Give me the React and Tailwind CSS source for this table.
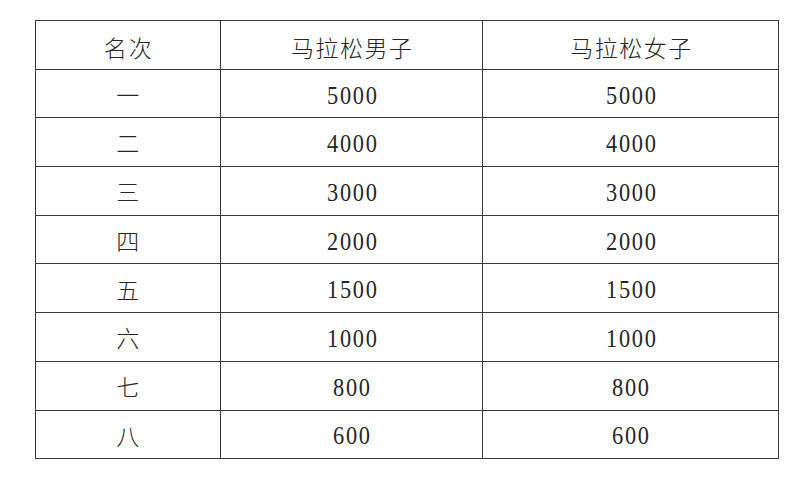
import React from "react";

const rows = [
  ["一", "5000", "5000"],
  ["二", "4000", "4000"],
  ["三", "3000", "3000"],
  ["四", "2000", "2000"],
  ["五", "1500", "1500"],
  ["六", "1000", "1000"],
  ["七", "800", "800"],
  ["八", "600", "600"],
];

const cjk = { fontFamily: '"Liberation Serif", "Noto Sans CJK SC", serif' };

function Num({ v }) {
  return (
    <span className="inline-block scale-x-[0.86] tracking-[2px] pl-[2px]">{v}</span>
  );
}

export default function App() {
  return (
    <div className="w-[800px] h-[495px] bg-white pl-[35px] pt-[20px]">
      <table
        className="border-collapse w-[744px] h-[439px] text-[#262626] font-light"
        style={cjk}
      >
        <colgroup>
          <col className="w-[185px]" />
          <col className="w-[263px]" />
          <col className="w-[296px]" />
        </colgroup>
        <thead>
          <tr className="h-[48.7px]">
            <th className="border border-[#3a3a3a] font-light text-[23px] tracking-[2px] pl-[2px] pt-[10px] pb-0">名次</th>
            <th className="border border-[#3a3a3a] font-light text-[23px] tracking-[1.5px] pl-[1.5px] pt-[10px] pb-0">马拉松男子</th>
            <th className="border border-[#3a3a3a] font-light text-[23px] tracking-[1.5px] pl-[1.5px] pt-[10px] pb-0">马拉松女子</th>
          </tr>
        </thead>
        <tbody>
          {rows.map((r) => (
            <tr key={r[0]} className="h-[48.7px]">
              <td className="border border-[#3a3a3a] text-center px-0 pb-0 pt-[7px] text-[23px]">{r[0]}</td>
              <td className="border border-[#3a3a3a] text-center p-0 text-[26px] pt-[3px]"><Num v={r[1]} /></td>
              <td className="border border-[#3a3a3a] text-center p-0 text-[26px] pt-[3px]"><Num v={r[2]} /></td>
            </tr>
          ))}
        </tbody>
      </table>
    </div>
  );
}
